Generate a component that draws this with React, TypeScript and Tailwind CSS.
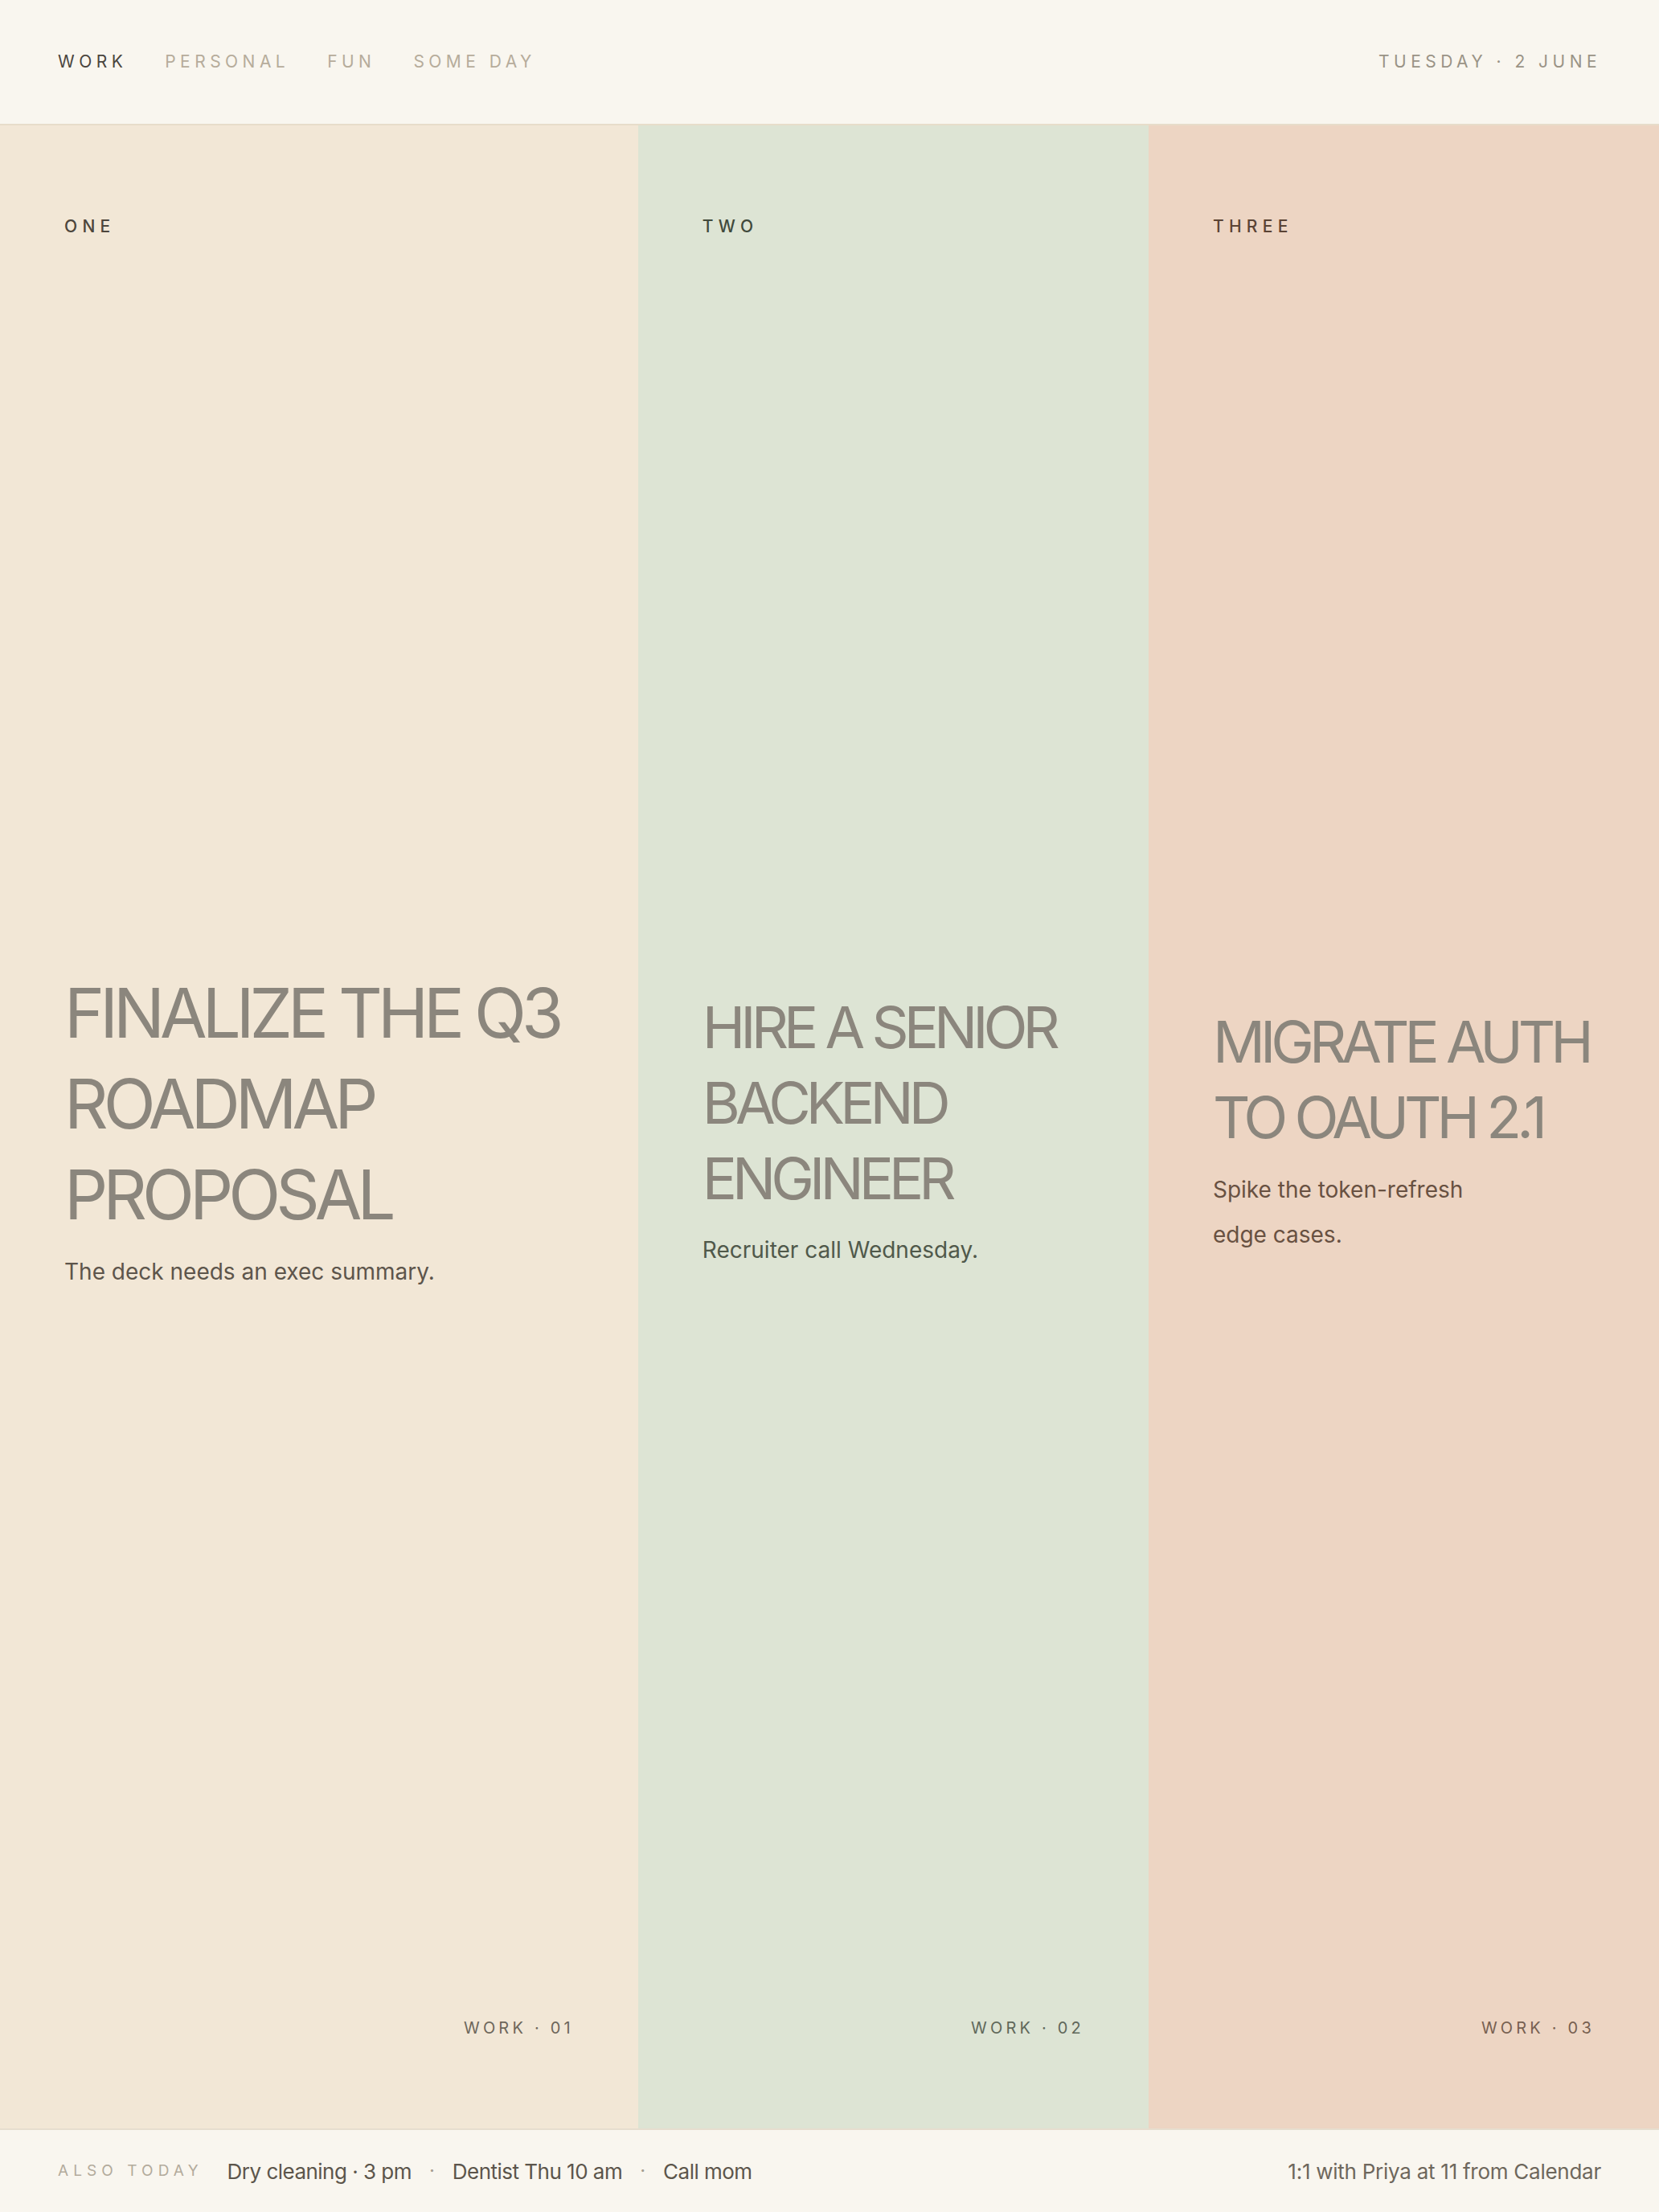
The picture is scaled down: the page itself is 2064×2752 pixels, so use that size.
import React from 'react';

type Task = {
  label: string;
  title: string;
  note: string;
  tag: string;
  bg: string;
  ink: string;
  titleSize: string;
  noteMargin: string;
};

const tasks: Task[] = [
  {
    label: 'ONE',
    title: 'FINALIZE THE Q3 ROADMAP PROPOSAL',
    note: 'The deck needs an exec summary.',
    tag: 'WORK · 01',
    bg: 'bg-[#f2e7d6]',
    ink: 'text-[#4d463c]',
    titleSize: 'text-[85px] leading-[113px]',
    noteMargin: 'mt-[11px]',
  },
  {
    label: 'TWO',
    title: 'HIRE A SENIOR BACKEND ENGINEER',
    note: 'Recruiter call Wednesday.',
    tag: 'WORK · 02',
    bg: 'bg-[#dde4d4]',
    ink: 'text-[#414a3c]',
    titleSize: 'text-[72px] leading-[94px]',
    noteMargin: 'mt-[14px]',
  },
  {
    label: 'THREE',
    title: 'MIGRATE AUTH TO OAUTH 2.1',
    note: 'Spike the token-refresh edge cases.',
    tag: 'WORK · 03',
    bg: 'bg-[#edd5c3]',
    ink: 'text-[#5a4334]',
    titleSize: 'text-[72px] leading-[94px]',
    noteMargin: 'mt-[15px]',
  },
];

const tabs = ['WORK', 'PERSONAL', 'FUN', 'SOME DAY'];
const errands = ['Dry cleaning · 3 pm', 'Dentist Thu 10 am', 'Call mom'];

function Column({ task }: { task: Task }) {
  return (
    <section className={`flex flex-col px-[80px] pt-[114px] pb-[113px] ${task.bg}`}>
      <div className={`text-[21px] leading-[24px] tracking-[0.3em] font-medium ${task.ink}`}>
        {task.label}
      </div>

      {/* title block sits in the middle of the column */}
      <div className="flex-1 flex flex-col justify-center pt-[8px]">
        <h2 className={`${task.titleSize} -mr-[24px] font-normal tracking-[-6px] text-[#8b867d]`}>
          {task.title}
        </h2>
        <p className={`${task.noteMargin} max-w-[75%] text-[28px] leading-[56px] ${task.ink} opacity-90`}>
          {task.note}
        </p>
      </div>

      <div className={`text-right text-[20px] leading-[24px] tracking-[0.21em] ${task.ink} opacity-80`}>
        {task.tag}
      </div>
    </section>
  );
}

export default function App() {
  return (
    <div className="h-[2752px] flex flex-col bg-[#f9f6ef] font-['Inter','Liberation_Sans',sans-serif]">
      <header className="h-[156px] shrink-0 flex items-center justify-between px-[72px] border-b-2 border-[#e7ddca]">
        <nav className="flex items-center gap-[47px]">
          {tabs.map((tab, i) => (
            <span
              key={tab}
              className={`text-[21px] tracking-[0.26em] ${i === 0 ? 'text-[#4a453e]' : 'text-[#b6ac9b]'}`}
            >
              {tab}
            </span>
          ))}
        </nav>
        <span className="text-[21px] tracking-[0.26em] text-[#9a9386]">TUESDAY · 2 JUNE</span>
      </header>

      <main className="flex-1 grid grid-cols-[5fr_4fr_4fr]">
        {tasks.map((task) => (
          <Column key={task.label} task={task} />
        ))}
      </main>

      <footer className="h-[104px] shrink-0 flex items-center justify-between px-[72px] border-t-2 border-[#e6decf]">
        <div className="flex items-center">
          <span className="mr-[30px] text-[19px] tracking-[0.32em] text-[#b3ab9c]">ALSO TODAY</span>
          {errands.map((item, i) => (
            <React.Fragment key={item}>
              {i > 0 && <span className="mx-[22px] text-[24px] text-[#a59d90]">·</span>}
              <span className="text-[26px] tracking-[-0.02em] text-[#5c554b]">{item}</span>
            </React.Fragment>
          ))}
        </div>
        <span className="text-[26px] tracking-[-0.01em] text-[#6e675c]">1:1 with Priya at 11 from Calendar</span>
      </footer>
    </div>
  );
}
